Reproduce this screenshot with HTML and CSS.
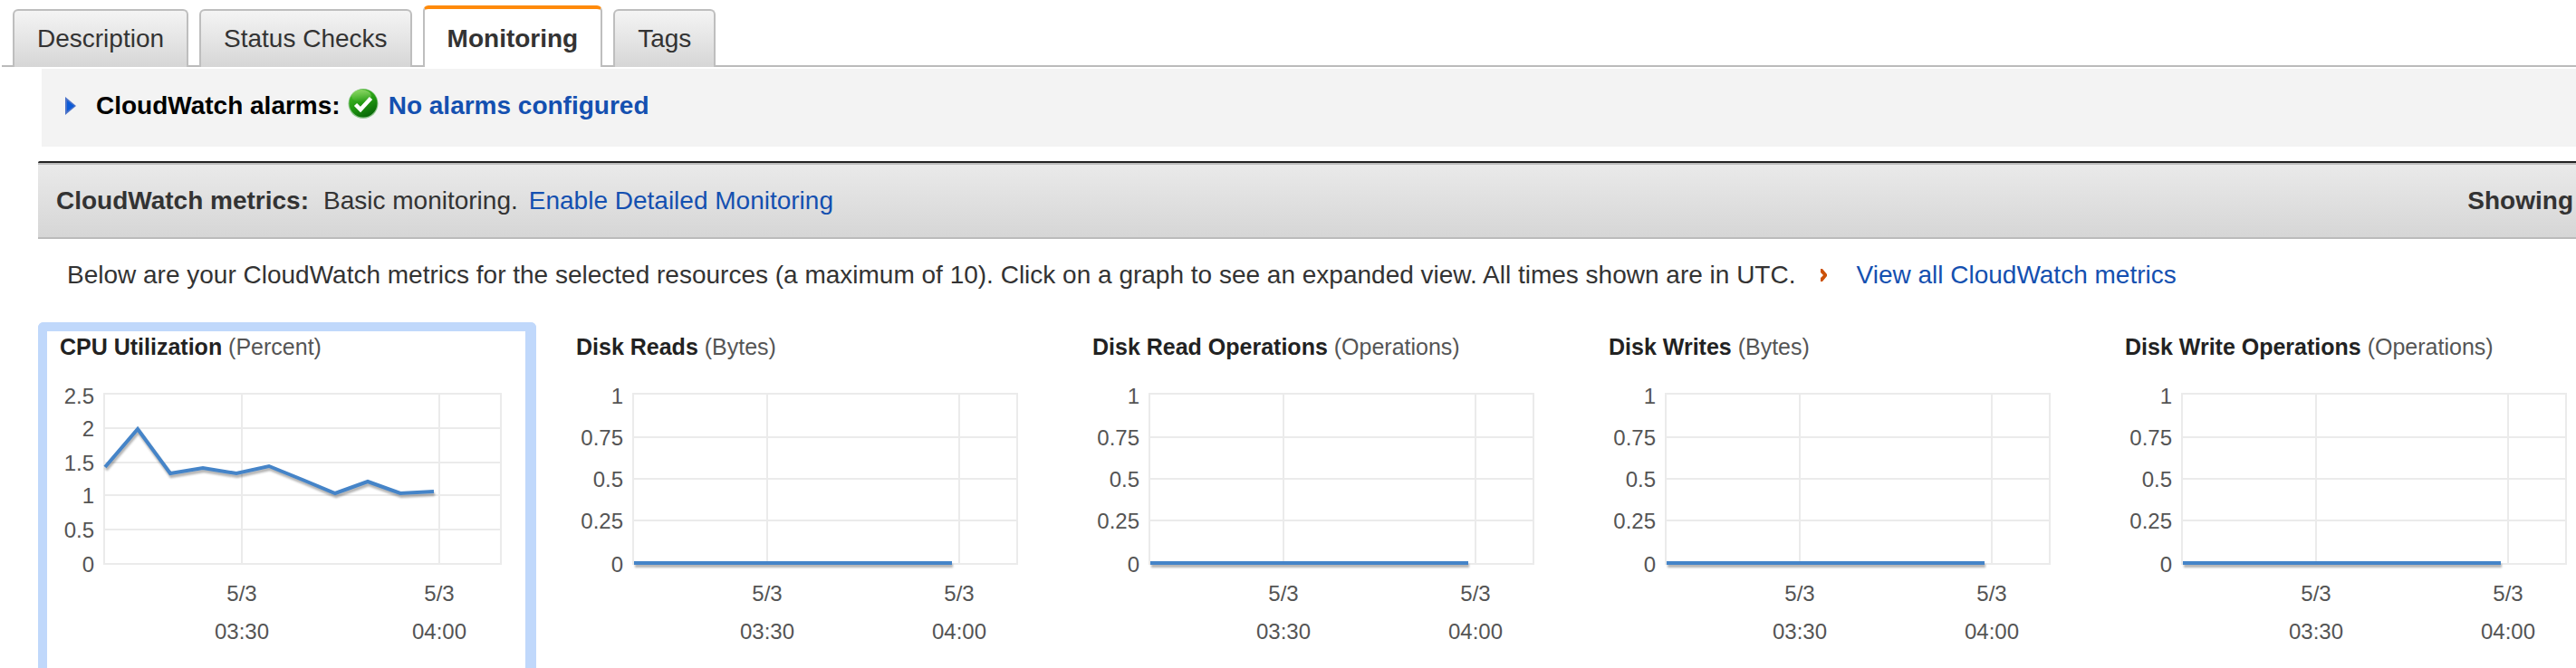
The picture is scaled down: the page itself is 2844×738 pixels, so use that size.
FILE: index.html
```html
<!DOCTYPE html>
<html lang="en">
<head>
<meta charset="utf-8">
<title>Instance monitoring</title>
<link rel="stylesheet" href="styles.css">
</head>
<body>
<div class="page">
  <div class="tabs" role="tablist">
    <button class="tab" role="tab" type="button">Description</button>
    <button class="tab" role="tab" type="button">Status Checks</button>
    <button class="tab tab-active" role="tab" type="button" aria-selected="true">Monitoring</button>
    <button class="tab" role="tab" type="button">Tags</button>
  </div>

  <section class="alarms">
    <button class="alarms-toggle" type="button" aria-expanded="false">
      <svg class="arrow" viewBox="0 0 12 20" aria-hidden="true"><path d="M0 0L12 10L0 20Z" fill="#4a72c8"/><path d="M2 4L10 10L2 16Z" fill="#0b5bd8"/></svg>
      <span>CloudWatch alarms:</span>
    </button>
    <svg class="ok-icon" viewBox="0 0 34 34" aria-hidden="true">
      <defs>
        <linearGradient id="ok" x1="0.2" y1="0" x2="0.7" y2="1"><stop offset="0" stop-color="#4fc02c"/><stop offset="0.5" stop-color="#229a12"/><stop offset="1" stop-color="#066306"/></linearGradient>
        <linearGradient id="gloss" x1="0" y1="0" x2="0" y2="1"><stop offset="0" stop-color="#a5e07c" stop-opacity="0.7"/><stop offset="1" stop-color="#a5e07c" stop-opacity="0"/></linearGradient>
      </defs>
      <circle cx="17" cy="16.5" r="16.5" fill="#8cc48a"/>
      <circle cx="17" cy="16" r="15.5" fill="url(#ok)"/>
      <ellipse cx="15" cy="8" rx="11" ry="7" fill="url(#gloss)"/>
      <path d="M8.500 17.500L14 23L25.500 10.500" fill="none" stroke="#fff" stroke-width="4.500"/>
    </svg>
    <a class="link" href="#alarms">No alarms configured</a>
  </section>

  <section class="metrics-bar">
    <p class="metrics-status"><strong>CloudWatch metrics:</strong><span>Basic monitoring.</span><a class="link" href="#detailed">Enable Detailed Monitoring</a></p>
    <strong>Showing</strong>
  </section>

  <div class="intro">
    <p>Below are your CloudWatch metrics for the selected resources (a maximum of 10). Click on a graph to see an expanded view. All times shown are in UTC.</p>
    <svg class="chevron" viewBox="0 0 7 14" aria-hidden="true"><path d="M0 0H2L7 6V8L2 14H0V10L3 7L0 4Z" fill="#cc5208"/></svg>
    <a class="link" href="#all">View all CloudWatch metrics</a>
  </div>

  <svg class="defs" aria-hidden="true">
    <defs>
      <g id="empty-chart">
        <path class="grid" d="M77 37H501M77 85H501M77 131H501M77 177H501M77 225H501M77 36V226M225 36V226M437 36V226M501 36V226"/>
        <path class="series" d="M78 224H429"/>
      </g>
    </defs>
  </svg>

  <main class="charts">
    <article class="card card-selected">
      <h2 class="title">CPU Utilization <span>(Percent)</span></h2>
      <svg class="chart" viewBox="0 0 528 320" role="img" aria-label="CPU Utilization">
        <path class="grid" d="M63 37H501M63 75H501M63 113H501M63 149H501M63 187H501M63 225H501M63 36V226M215 36V226M433 36V226M501 36V226"/>
        <polyline class="series" points="64,118 100,76 136,125 172,119 209,125 245,117 282,132 318,147 354,134 390,147 427,145"/>
        <g class="y-axis"><text x="52" y="48">2.5</text><text x="52" y="84">2</text><text x="52" y="122">1.5</text><text x="52" y="158">1</text><text x="52" y="196">0.5</text><text x="52" y="234">0</text></g>
        <g class="x-axis"><text x="215" y="266">5/3</text><text x="215" y="308">03:30</text><text x="433" y="266">5/3</text><text x="433" y="308">04:00</text></g>
      </svg>
    </article>
    <article class="card">
      <h2 class="title">Disk Reads <span>(Bytes)</span></h2>
      <svg class="chart" viewBox="0 0 528 320" role="img" aria-label="Disk Reads">
        <use href="#empty-chart"/>
        <g class="y-axis"><text x="66" y="48">1</text><text x="66" y="94">0.75</text><text x="66" y="140">0.5</text><text x="66" y="186">0.25</text><text x="66" y="234">0</text></g>
        <g class="x-axis"><text x="225" y="266">5/3</text><text x="225" y="308">03:30</text><text x="437" y="266">5/3</text><text x="437" y="308">04:00</text></g>
      </svg>
    </article>
    <article class="card">
      <h2 class="title">Disk Read Operations <span>(Operations)</span></h2>
      <svg class="chart" viewBox="0 0 528 320" role="img" aria-label="Disk Read Operations">
        <use href="#empty-chart"/>
        <g class="y-axis"><text x="66" y="48">1</text><text x="66" y="94">0.75</text><text x="66" y="140">0.5</text><text x="66" y="186">0.25</text><text x="66" y="234">0</text></g>
        <g class="x-axis"><text x="225" y="266">5/3</text><text x="225" y="308">03:30</text><text x="437" y="266">5/3</text><text x="437" y="308">04:00</text></g>
      </svg>
    </article>
    <article class="card">
      <h2 class="title">Disk Writes <span>(Bytes)</span></h2>
      <svg class="chart" viewBox="0 0 528 320" role="img" aria-label="Disk Writes">
        <use href="#empty-chart"/>
        <g class="y-axis"><text x="66" y="48">1</text><text x="66" y="94">0.75</text><text x="66" y="140">0.5</text><text x="66" y="186">0.25</text><text x="66" y="234">0</text></g>
        <g class="x-axis"><text x="225" y="266">5/3</text><text x="225" y="308">03:30</text><text x="437" y="266">5/3</text><text x="437" y="308">04:00</text></g>
      </svg>
    </article>
    <article class="card">
      <h2 class="title">Disk Write Operations <span>(Operations)</span></h2>
      <svg class="chart" viewBox="0 0 528 320" role="img" aria-label="Disk Write Operations">
        <use href="#empty-chart"/>
        <g class="y-axis"><text x="66" y="48">1</text><text x="66" y="94">0.75</text><text x="66" y="140">0.5</text><text x="66" y="186">0.25</text><text x="66" y="234">0</text></g>
        <g class="x-axis"><text x="225" y="266">5/3</text><text x="225" y="308">03:30</text><text x="437" y="266">5/3</text><text x="437" y="308">04:00</text></g>
      </svg>
    </article>
  </main>
</div>
</body>
</html>
```

FILE: styles.css
```css
* { box-sizing: border-box; }

body {
  margin: 0;
  background: #fff;
  color: #333;
  font: 28px/32px "Liberation Sans", Arial, sans-serif;
}

p, h2 { margin: 0; }

button {
  font: inherit;
  color: inherit;
}

.page {
  display: flex;
  flex-direction: column;
  min-height: 100vh;
  overflow-x: clip;
}

.link {
  color: #1450b0;
  text-decoration: none;
}

/* Tabs */
.tabs {
  display: flex;
  align-items: flex-end;
  gap: 12px;
  margin: 6px 0 0 2px;
  padding-left: 12px;
  border-bottom: 2px solid #bbb;
}

.tab {
  margin: 0 0 -2px;
  padding: 15px 25px;
  border: 2px solid #bebebe;
  border-bottom: 0;
  border-radius: 6px 6px 0 0;
  background: linear-gradient(#f4f4f4, #d6d6d6);
}

.tab-active {
  border-top: 4px solid #ff8a0a;
  padding-top: 17px;
  background: #fff;
  font-weight: bold;
}

/* Alarms */
.alarms {
  display: flex;
  align-items: flex-start;
  margin: 2px 0 0 46px;
  padding: 22px 26px 26px;
  background: #f3f3f3;
  font-weight: bold;
  line-height: 38px;
}

.alarms-toggle {
  display: flex;
  align-items: center;
  gap: 22px;
  padding: 0;
  border: 0;
  background: none;
  color: #000;
}

.arrow {
  width: 12px;
  height: 20px;
}

.ok-icon {
  width: 34px;
  height: 34px;
  margin: 0 11px 0 8px;
}

/* Metrics heading */
.metrics-bar {
  display: flex;
  justify-content: space-between;
  margin: 16px 0 0 42px;
  padding: 26px 3px 24px 20px;
  border-top: 2px solid #222;
  border-bottom: 2px solid #bbb;
  border-top-left-radius: 2px;
  background: linear-gradient(#eaeaea, #d6d6d6);
  box-shadow: inset 0 2px #bbb;
}

.metrics-status {
  display: flex;
  gap: 12px;
}

.metrics-status strong { margin-right: 4px; }

.intro {
  display: flex;
  align-items: center;
  padding: 24px 0 36px 74px;
}

.chevron {
  width: 7px;
  height: 14px;
  margin: 0 32px 0 28px;
}

/* Charts: the row runs past the right edge of the window */
.charts {
  flex: 1;
  display: grid;
  grid-template-columns: repeat(5, minmax(0, 1fr));
  gap: 20px;
  margin: 0 -28px 0 42px;
}

.card {
  border: solid transparent;
  border-width: 10px 12px 0 10px;
  border-radius: 6px 6px 0 0;
}

.card-selected { border-color: #c0d8fb; }

.title {
  padding: 2px 0 0 14px;
  color: #222;
  font-size: 25px;
  line-height: 30px;
  white-space: nowrap;
}

.title span {
  color: #555;
  font-weight: normal;
}

.chart {
  display: block;
  width: 100%;
}

.defs {
  position: absolute;
  width: 0;
  height: 0;
}

.grid {
  fill: none;
  stroke: #ebebeb;
  stroke-width: 2;
}

.series {
  fill: none;
  stroke: #4584c8;
  stroke-width: 4;
  filter: drop-shadow(1px 3px 1px rgba(0, 0, 0, 0.3));
}

.y-axis, .x-axis {
  fill: #545454;
  font-size: 24px;
}

.y-axis { text-anchor: end; }
.x-axis { text-anchor: middle; }
```
